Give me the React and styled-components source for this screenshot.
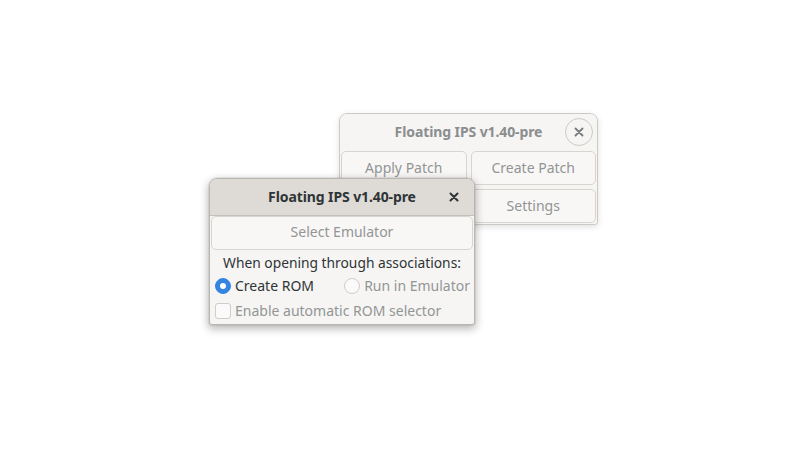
import React from "react";
import styled, { createGlobalStyle } from "styled-components";

const Global = createGlobalStyle`
  html, body { margin: 0; padding: 0; background: #ffffff; }
  body { font-family: "Noto Sans", "Open Sans", sans-serif; }
`;

const Desktop = styled.div`
  position: relative;
  width: 800px;
  height: 450px;
  overflow: hidden;
  background: #ffffff;
`;

const Window = styled.div`
  position: absolute;
  left: ${p => p.$x}px;
  top: ${p => p.$y}px;
  width: ${p => p.$w}px;
  background: #f6f5f4;
  border: 1px solid ${p => (p.$active ? "#b9b5b0" : "#cdc9c4")};
  border-radius: 8px 8px 3px 3px;
  box-shadow: ${p =>
    p.$active
      ? "0 3px 9px 1px rgba(0,0,0,0.28), 0 0 0 1px rgba(0,0,0,0.05)"
      : "0 2px 6px rgba(0,0,0,0.12)"};
  display: flex;
  flex-direction: column;
  overflow: hidden;
`;

const TitleBar = styled.div`
  height: ${p => p.$h}px;
  display: grid;
  grid-template-columns: 40px 1fr 40px;
  align-items: center;
  background: ${p => (p.$active ? "#dedbd7" : "#f6f5f4")};
  border-bottom: 1px solid ${p => (p.$active ? "#c3bfba" : "transparent")};
  box-sizing: border-box;
`;

const Title = styled.div`
  grid-column: 2;
  text-align: center;
  font-weight: 700;
  font-size: 14px;
  color: ${p => (p.$active ? "#2e3436" : "#8b8e8f")};
  letter-spacing: -0.1px;
  padding-bottom: 1px;
`;

const CloseBtn = styled.div`
  grid-column: 3;
  justify-self: ${p => (p.$round ? "end" : "center")};
  margin-right: ${p => (p.$round ? "4px" : "0")};
  width: ${p => (p.$round ? 28 : 20)}px;
  height: ${p => (p.$round ? 28 : 20)}px;
  border-radius: 50%;
  box-sizing: border-box;
  border: ${p => (p.$round ? "1px solid #cdc9c4" : "none")};
  display: flex;
  align-items: center;
  justify-content: center;
`;

const Body = styled.div`
  display: flex;
  flex-direction: column;
  padding: 0 1px 1px;
`;

const ButtonGrid = styled.div`
  display: grid;
  grid-template-columns: 1fr 1fr;
  column-gap: 4px;
  row-gap: 4px;
`;

const Button = styled.div`
  height: ${p => p.$h || 34}px;
  box-sizing: border-box;
  border: 1px solid #d8d4d0;
  border-radius: 5px;
  background: #f8f7f6;
  display: flex;
  align-items: center;
  justify-content: center;
  font-size: 14px;
  color: #929595;
  padding-bottom: ${p => p.$pb ?? 2}px;
`;

const Label = styled.div`
  text-align: center;
  font-size: 13.8px;
  color: #2e3436;
  margin-top: 3px;
  height: 20px;
  line-height: 20px;
`;

const RadioRow = styled.div`
  display: flex;
  justify-content: space-between;
  align-items: center;
  padding: 0 3px 0 4px;
  height: 26px;
`;

const Option = styled.label`
  display: flex;
  align-items: center;
  gap: 4px;
  font-size: 14px;
  color: ${p => (p.$disabled ? "#929595" : "#2e3436")};
`;

const OptionText = styled.span`
  padding-bottom: 2px;
`;

const Radio = styled.span`
  width: 16px;
  height: 16px;
  border-radius: 50%;
  box-sizing: border-box;
  display: inline-flex;
  align-items: center;
  justify-content: center;
  background: ${p => (p.$checked ? "#3584e4" : "#fbfafa")};
  border: 1px solid ${p => (p.$checked ? "#3584e4" : "#d0ccc8")};
  &::after {
    content: "";
    display: ${p => (p.$checked ? "block" : "none")};
    width: 6px;
    height: 6px;
    border-radius: 50%;
    background: #ffffff;
  }
`;

const CheckRow = styled.div`
  display: flex;
  align-items: center;
  padding: 0 4px;
  height: 24px;
`;

const Checkbox = styled.span`
  width: 16px;
  height: 16px;
  border-radius: 3px;
  box-sizing: border-box;
  background: #fbfafa;
  border: 1px solid #d0ccc8;
`;

function XIcon({ size, color, weight }) {
  return (
    <svg width={size} height={size} viewBox="0 0 10 10">
      <path d="M1.5 1.5 L8.5 8.5 M8.5 1.5 L1.5 8.5" stroke={color} strokeWidth={weight} strokeLinecap="round" />
    </svg>
  );
}

export default function App() {
  return (
    <Desktop>
      <Global />
      <Window $x={339} $y={113} $w={257}>
        <TitleBar $h={37}>
          <Title>Floating IPS v1.40-pre</Title>
          <CloseBtn $round>
            <XIcon size={10} color="#7a7d7e" weight={1.9} />
          </CloseBtn>
        </TitleBar>
        <Body>
          <ButtonGrid>
            <Button>Apply Patch</Button>
            <Button>Create Patch</Button>
            <Button aria-hidden="true" />
            <Button>Settings</Button>
          </ButtonGrid>
        </Body>
      </Window>

      <Window $x={209} $y={178} $w={264} $active>
        <TitleBar $h={37} $active>
          <Title $active>Floating IPS v1.40-pre</Title>
          <CloseBtn>
            <XIcon size={10} color="#2e3436" weight={2} />
          </CloseBtn>
        </TitleBar>
        <Body>
          <Button $h={34} $pb={3}>Select Emulator</Button>
          <Label>When opening through associations:</Label>
          <RadioRow>
            <Option>
              <Radio $checked />
              <OptionText>Create ROM</OptionText>
            </Option>
            <Option $disabled>
              <Radio />
              <OptionText>Run in Emulator</OptionText>
            </Option>
          </RadioRow>
          <CheckRow>
            <Option $disabled>
              <Checkbox />
              <OptionText>Enable automatic ROM selector</OptionText>
            </Option>
          </CheckRow>
        </Body>
      </Window>
    </Desktop>
  );
}
